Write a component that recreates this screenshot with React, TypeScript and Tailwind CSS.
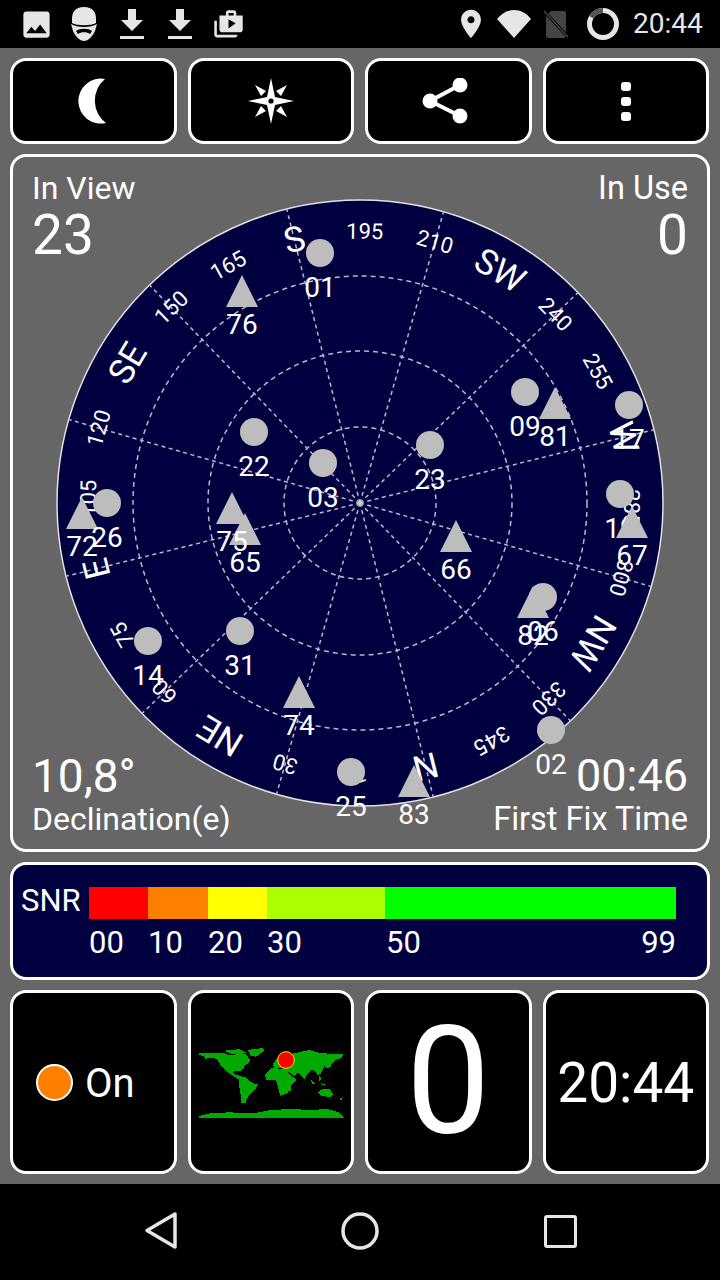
import React from "react"

const cardinals: Record<number, string> = { 0: "N", 45: "NE", 90: "E", 135: "SE", 180: "S", 225: "SW", 270: "W", 315: "NW" }
const CX = 360
const CY = 503
const ROT = -194

type Sat = { id: string; x: number; y: number; tri?: boolean }

const sats: Sat[] = [
  { id: "01", x: 320, y: 253 },
  { id: "09", x: 525, y: 392 },
  { id: "17", x: 629, y: 405 },
  { id: "22", x: 254, y: 432 },
  { id: "03", x: 323, y: 463 },
  { id: "23", x: 430, y: 445 },
  { id: "19", x: 620, y: 494 },
  { id: "14", x: 148, y: 641 },
  { id: "31", x: 240, y: 631 },
  { id: "25", x: 351, y: 772 },
  { id: "02", x: 551, y: 730 },
  { id: "76", x: 242, y: 307, tri: true },
  { id: "81", x: 555, y: 419, tri: true },
  { id: "72", x: 82, y: 529, tri: true },
  { id: "26", x: 107, y: 503 },
  { id: "65", x: 245, y: 545, tri: true },
  { id: "75", x: 232, y: 524, tri: true },
  { id: "66", x: 456, y: 552, tri: true },
  { id: "67", x: 632, y: 538, tri: true },
  { id: "06", x: 543, y: 597 },
  { id: "82", x: 533, y: 618, tri: true },
  { id: "74", x: 299, y: 708, tri: true },
  { id: "83", x: 414, y: 797, tri: true },
]

const azimuths = Array.from({ length: 24 }, (_, i) => i * 15)

const SkyPlot = () => (
  <svg viewBox="55 198 610 610" className="w-[610px] h-[610px] overflow-visible">
    <circle cx={CX} cy={CY} r={303} fill="#000040" stroke="#e0e0e0" strokeWidth={1.5} />
    {[76, 152, 227].map(r => (
      <circle key={r} cx={CX} cy={CY} r={r} fill="none" stroke="#b8b8cc" strokeWidth={1.5} strokeDasharray="5 4" />
    ))}
    {azimuths.filter(a => a % 30 === 0).map(a => {
      const t = ((a + ROT) * Math.PI) / 180
      return (
        <line key={a} x1={CX} y1={CY} x2={CX + 303 * Math.sin(t)} y2={CY - 303 * Math.cos(t)}
          stroke="#b8b8cc" strokeWidth={1.5} strokeDasharray="4 3.5" />
      )
    })}
    <circle cx={CX} cy={CY} r={2} fill="#d0d0d8" />
    {azimuths.map(a => {
      const deg = a + ROT
      const t = (deg * Math.PI) / 180
      const big = cardinals[a]
      const x = CX + 272 * Math.sin(t)
      const y = CY - 272 * Math.cos(t)
      return (
        <text key={a} x={x} y={y} dy=".36em" textAnchor="middle" fill="#fff"
          fontSize={big ? 35 : 22} transform={`rotate(${deg} ${x} ${y})`}>
          {big || a}
        </text>
      )
    })}
    {sats.map(s => (
      <g key={s.id}>
        {s.tri ? (
          <polygon points={`${s.x - 16},${s.y} ${s.x + 16},${s.y} ${s.x},${s.y - 32}`} fill="#bdbdbd" />
        ) : (
          <circle cx={s.x} cy={s.y} r={14} fill="#bdbdbd" />
        )}
        <text x={s.x} y={s.tri ? s.y + 27 : s.y + 44} textAnchor="middle" fill="#fff" fontSize={28}>{s.id}</text>
      </g>
    ))}
  </svg>
)

const WorldMap = () => (
  <svg viewBox="0 0 450 234" className="w-[150px] h-[78px] mt-[2px]">
    <g fill="#00aa00" shapeRendering="crispEdges">
      <polygon points="8,28 30,28 65,26 85,28 100,34 115,33 125,28 150,30 162,48 158,58 148,62 142,75 130,82 118,80 112,85 118,92 130,95 150,102 132,108 118,100 100,88 85,76 72,60 62,45 50,42 28,44 24,38 8,32" />
      <polygon points="132,105 150,100 165,115 186,122 178,135 165,148 155,160 148,178 135,178 135,160 130,130 128,115" />
      <polygon points="155,18 200,12 205,20 180,38 165,35" />
      <polygon points="85,20 110,18 130,15 150,25 130,32 100,28" />
      <polygon points="10,216 40,208 100,205 160,208 190,205 225,198 285,195 345,198 395,195 430,205 443,220 443,222 10,222" />
      <polygon points="230,62 245,40 285,30 340,18 375,28 443,30 437,42 420,48 407,58 403,70 393,72 385,65 375,88 365,95 357,80 345,78 333,90 325,105 315,95 307,85 295,95 270,80 255,72 235,72" />
      <polygon points="207,90 225,72 265,75 285,95 303,108 285,125 275,148 253,155 245,125 240,108 210,108" />
      <polygon points="280,130 287,128 283,142 277,140" />
      <polygon points="343,105 360,120 350,122" />
      <polygon points="370,95 377,105 370,110" />
      <polygon points="375,118 390,120 380,125" />
      <polygon points="365,145 380,135 400,135 413,150 403,160 375,155" />
      <polygon points="430,165 440,160 435,170" />
    </g>
    <circle cx={270} cy={48} r={25} fill="#ff0000" stroke="#ffdd00" strokeWidth={3} />
  </svg>
)

const Tile = ({ children }: { children: React.ReactNode }) => (
  <div className="flex items-center justify-center bg-black border-[3px] border-white rounded-[16px]">
    {children}
  </div>
)

const StatusBar = () => (
  <div className="h-[48px] bg-black flex items-center text-[#e6e6e6] relative">
    <svg viewBox="0 0 24 24" className="w-[35px] h-[35px] ml-[19px] fill-current">
      <path d="M21 19V5c0-1.1-.9-2-2-2H5c-1.1 0-2 .9-2 2v14c0 1.1.9 2 2 2h14c1.1 0 2-.9 2-2zM8.5 13.5l2.5 3.01L14.5 12l4.5 6H5l3.5-4.5z" />
    </svg>
    <svg viewBox="0 0 26 34" className="w-[26px] h-[34px] ml-[17px] fill-current">
      <path d="M13 0C22 0 25 5 25 12L25 16C20 19 6 19 1 16L1 12C1 5 4 0 13 0Z" />
      <path fillRule="evenodd" d="M0 17C6 21 20 21 26 17L24 24C22 29 17 34 13 34C9 34 4 29 2 24ZM5 24C9 21 17 21 21 24L19 27C16 24.5 10 24.5 7 27Z" />
    </svg>
    <svg viewBox="0 0 24 31" className="w-[24px] h-[31px] ml-[23px] fill-current">
      <path d="M8 0H16V11H23L12 22L1 11H8ZM0 27H24V30H0Z" />
    </svg>
    <svg viewBox="0 0 24 31" className="w-[24px] h-[31px] ml-[24px] fill-current">
      <path d="M8 0H16V11H23L12 22L1 11H8ZM0 27H24V30H0Z" />
    </svg>
    <svg viewBox="0 0 24 24" className="w-[31px] h-[31px] ml-[21px] fill-current">
      <path d="M3 9H1v11c0 1.11.89 2 2 2h14c1.11 0 2-.89 2-2H3V9zm15-4V3c0-1.11-.89-2-2-2h-4c-1.11 0-2 .89-2 2v2H5v11c0 1.11.89 2 2 2h14c1.11 0 2-.89 2-2V5h-5zm-6-2h4v2h-4V3zm0 12V8l5.5 3-5.5 4z" />
    </svg>
    <svg viewBox="0 0 24 24" className="w-[34px] h-[34px] ml-[210px] fill-current">
      <path d="M12 2C8.13 2 5 5.13 5 9c0 5.25 7 13 7 13s7-7.75 7-13c0-3.87-3.13-7-7-7zm0 9.5c-1.38 0-2.5-1.12-2.5-2.5s1.12-2.5 2.5-2.5 2.5 1.12 2.5 2.5-1.12 2.5-2.5 2.5z" />
    </svg>
    <svg viewBox="0 0 34 28" className="w-[34px] h-[28px] ml-[9px] fill-current">
      <path d="M0 9C9 -3 25 -3 34 9L17 28Z" />
    </svg>
    <svg viewBox="0 0 26 30" className="w-[26px] h-[30px] ml-[12px]">
      <path d="M8 2H21C22 2 23 3 23 4V27C23 28 22 29 21 29H5C4 29 3 28 3 27V7Z" fill="#444" />
      <path d="M1 2L25 28" stroke="#000" strokeWidth={3} />
      <path d="M1 2L25 28" stroke="#444" strokeWidth={1.5} />
    </svg>
    <svg viewBox="0 0 32 32" className="w-[32px] h-[32px] ml-[18px]">
      <circle cx={16} cy={16} r={13.5} fill="none" stroke="#e6e6e6" strokeWidth={5} />
      <path d="M16 2.5A13.5 13.5 0 0 0 4.3 9.2" fill="none" stroke="#555" strokeWidth={5} />
    </svg>
    <span className="ml-[14px] text-[28px] leading-none">20:44</span>
  </div>
)

const NavBar = () => (
  <div className="h-[96px] bg-black flex items-center text-[#e6e6e6] pb-[2px]">
    <svg viewBox="0 0 36 40" className="w-[36px] h-[40px] ml-[143px]">
      <path d="M32 3V36L4 19.5Z" fill="none" stroke="currentColor" strokeWidth={3.5} strokeLinejoin="round" />
    </svg>
    <svg viewBox="0 0 38 38" className="w-[38px] h-[38px] ml-[162px]">
      <circle cx={19} cy={19} r={17} fill="none" stroke="currentColor" strokeWidth={3.5} />
    </svg>
    <div className="w-[33px] h-[33px] ml-[165px] border-[3.5px] border-current rounded-[3px]" />
  </div>
)

export default function App() {
  return (
    <div className="w-[720px] h-[1280px] flex flex-col bg-[#666666] text-white [font-family:Roboto,sans-serif] overflow-hidden">
      <StatusBar />

      <div className="flex-1 flex flex-col gap-[10px] p-[10px]">
        <div className="grid grid-cols-4 gap-[11px] h-[86px] mr-[1px]">
          <Tile>
            <svg viewBox="0 0 28 44" className="w-[28px] h-[44px] fill-white overflow-visible">
              <path d="M26 0A22.5 22.5 0 1 0 27 44A28 28 0 0 1 26 0Z" />
            </svg>
          </Tile>
          <Tile>
            <svg viewBox="-23 -23 46 46" className="w-[46px] h-[46px]">
              <path d="M0 -23L4 -4L23 0L4 4L0 23L-4 4L-23 0L-4 -4Z" fill="#fff" />
              <circle r={2.6} fill="#000" />
              <path d="M16 -16L10 -5L5 -10ZM-16 -16L-5 -10L-10 -5ZM16 16L5 10L10 5ZM-16 16L-10 5L-5 10Z" fill="#fff" />
            </svg>
          </Tile>
          <Tile>
            <svg viewBox="0 0 46 46" className="w-[46px] h-[46px] mr-[7px] fill-white stroke-white">
              <path d="M38 7L8 23L38 38" fill="none" strokeWidth={4} />
              <circle cx={38} cy={7} r={7.5} strokeWidth={0} />
              <circle cx={8} cy={23} r={7.5} strokeWidth={0} />
              <circle cx={38} cy={38} r={7.5} strokeWidth={0} />
            </svg>
          </Tile>
          <Tile>
            <div className="flex flex-col gap-[6px]">
              <div className="w-[10px] h-[9px] bg-white rounded-[3px]" />
              <div className="w-[10px] h-[9px] bg-white rounded-[3px]" />
              <div className="w-[10px] h-[9px] bg-white rounded-[3px]" />
            </div>
          </Tile>
        </div>

        <div className="relative h-[698px] border-[3px] border-white rounded-[16px] flex items-center justify-center">
          <SkyPlot />
          <div className="absolute left-[19px] top-[13px] flex flex-col">
            <span className="text-[32px] leading-[36px]">In View</span>
            <span className="text-[55px] leading-[58px]">23</span>
          </div>
          <div className="absolute right-[19px] top-[13px] flex flex-col items-end">
            <span className="text-[32.5px] leading-[36px]">In Use</span>
            <span className="text-[55px] leading-[58px]">0</span>
          </div>
          <div className="absolute left-[19px] bottom-[12px] flex flex-col">
            <span className="text-[46px] leading-[50px]">10,8°</span>
            <span className="text-[32px] leading-[36px]">Declination(e)</span>
          </div>
          <div className="absolute right-[19px] bottom-[12px] flex flex-col items-end">
            <span className="text-[45px] leading-[50px]">00:46</span>
            <span className="text-[32.5px] leading-[36px]">First Fix Time</span>
          </div>
        </div>

        <div className="h-[118px] bg-[#000040] border-[3px] border-white rounded-[16px] flex pl-[8px] pr-[31px] pt-[22px] gap-[8px]">
          <span className="text-[31px] leading-[28px] w-[60px]">SNR</span>
          <div className="flex-1 flex flex-col">
            <div className="grid grid-cols-[59px_60px_59px_118px_1fr] h-[32px]">
              <div className="bg-[#ff0000]" />
              <div className="bg-[#ff8000]" />
              <div className="bg-[#ffff00]" />
              <div className="bg-[#aaff00]" />
              <div className="bg-[#00ff00]" />
            </div>
            <div className="grid grid-cols-[59px_60px_59px_118px_1fr] mt-[6px] text-[31px] leading-[36px]">
              <span>00</span>
              <span>10</span>
              <span>20</span>
              <span>30</span>
              <div className="flex justify-between pl-[1px]">
                <span>50</span>
                <span>99</span>
              </div>
            </div>
          </div>
        </div>

        <div className="grid grid-cols-4 gap-[11px] h-[184px] mr-[1px]">
          <Tile>
            <div className="w-full flex items-center gap-[12px] pl-[23px]">
              <div className="w-[37px] h-[37px] rounded-full bg-[#ff8000] border-2 border-white" />
              <span className="text-[40px] leading-none pt-[3px]">On</span>
            </div>
          </Tile>
          <Tile><WorldMap /></Tile>
          <Tile><span className="text-[150px] leading-none">0</span></Tile>
          <Tile><span className="text-[55px] leading-none pt-[2px]">20:44</span></Tile>
        </div>
      </div>

      <NavBar />
    </div>
  )
}
